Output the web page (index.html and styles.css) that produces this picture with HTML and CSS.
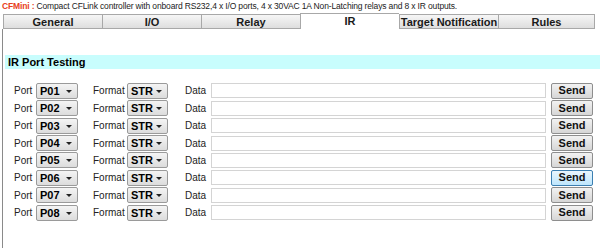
FILE: index.html
```html
<!DOCTYPE html>
<html lang="en">
<head>
  <meta charset="UTF-8" />
  <title>CFMini - IR</title>
  <link rel="stylesheet" href="styles.css">
</head>
<body>
  <div class="info"><span class="model">CFMini :</span> Compact CFLink controller with onboard RS232,4 x I/O ports, 4 x 30VAC 1A Non-Latching relays and 8 x IR outputs.</div>

  <div class="tabs">
    <div class="tab">General</div>
    <div class="tab">I/O</div>
    <div class="tab">Relay</div>
    <div class="tab active">IR</div>
    <div class="tab">Target Notification</div>
    <div class="tab">Rules</div>
  </div>

  <div class="panel">
    <div class="section">IR Port Testing</div>
    <div class="rows" id="rows"></div>
  </div>

<script>
  // Build the 8 IR port rows
  const rows = document.getElementById('rows');
  for (let i = 1; i <= 8; i++) {
    const port = 'P0' + i;
    rows.innerHTML += `
      <div class="row">
        <span class="lbl lbl-port">Port</span>
        <div class="sel sel-port">${port}<i class="arrow"></i></div>
        <span class="lbl lbl-format">Format</span>
        <div class="sel sel-format">STR<i class="arrow"></i></div>
        <span class="lbl lbl-data">Data</span>
        <input class="data" type="text" />
        <button class="send${i === 6 ? ' hover' : ''}">Send</button>
      </div>`;
  }
</script>
</body>
</html>
```

FILE: styles.css
```css
html, body {
  margin: 0;
  padding: 0;
  background: #fff;
  font-family: "Liberation Sans", Arial, sans-serif;
  color: #000;
}
.info {
  height: 13px;
  line-height: 12px;
  padding-left: 2px;
  font-family: "Liberation Sans", sans-serif;
  font-size: 8.5px;
  letter-spacing: -0.15px;
  color: #222;
  white-space: nowrap;
}
.model {
  color: #e8401c;
  font-weight: bold;
}
.tabs {
  display: flex;
  margin-left: 3px;
  height: 16px;
  align-items: flex-end;
}
.tab {
  flex-shrink: 0;
  width: 99px;
  height: 15px;
  box-sizing: border-box;
  border: 1px solid #a8a8a8;
  border-right: none;
  background: linear-gradient(#f6f6f6, #dedede);
  font-weight: bold;
  font-size: 11px;
  line-height: 14px;
  text-align: center;
  color: #1a1a1a;
}
.tab:last-child {
  width: 97px;
  border-right: 1px solid #a8a8a8;
}
.tab.active {
  height: 16px;
  background: #fff;
  border-bottom: none;
  line-height: 14px;
}
.panel {
  margin-left: 2px;
  border-left: 1px solid #8a8a8a;
  height: 219px;
  overflow: hidden;
}
.section {
  margin-top: 26px;
  margin-left: 2px;
  height: 14px;
  background: #c8fdfd;
  font-weight: bold;
  font-size: 11px;
  line-height: 14px;
  padding-left: 3px;
}
.rows {
  margin-top: 13px;
}
.row {
  display: flex;
  align-items: center;
  height: 17.45px;
  font-size: 10px;
}
.row > * {
  flex-shrink: 0;
}
.lbl {
  color: #222;
}
.lbl-port {
  margin-left: 11px;
  width: 22px;
}
.lbl-format {
  margin-left: 15px;
  width: 34px;
}
.lbl-data {
  margin-left: 17px;
  width: 26px;
}
.sel {
  position: relative;
  box-sizing: border-box;
  height: 16px;
  border: 1px solid #9a9a9a;
  border-radius: 2px;
  background: linear-gradient(#f4f4f4, #dcdcdc);
  font-weight: bold;
  font-size: 11px;
  line-height: 14px;
  padding-left: 3px;
}
.sel-port {
  width: 42px;
}
.sel-format {
  width: 41px;
}
.arrow {
  position: absolute;
  right: 5px;
  top: 6px;
  border-left: 3px solid transparent;
  border-right: 3px solid transparent;
  border-top: 3px solid #222;
}
.data {
  box-sizing: border-box;
  width: 335px;
  height: 15px;
  margin: 0;
  border: 1px solid #d4d4d4;
  padding: 0;
  background: #fff;
}
.send {
  box-sizing: border-box;
  width: 42px;
  height: 16px;
  margin-left: 5px;
  padding: 0;
  border: 1px solid #8e8e8e;
  border-radius: 2px;
  background: linear-gradient(#f2f2f2, #d6d6d6);
  font-family: "Liberation Sans", Arial, sans-serif;
  font-weight: bold;
  font-size: 11px;
  line-height: 13px;
  color: #111;
}
.send.hover {
  border-color: #3c7fb1;
  background: linear-gradient(#eaf6fd, #bee6fd);
}
```
